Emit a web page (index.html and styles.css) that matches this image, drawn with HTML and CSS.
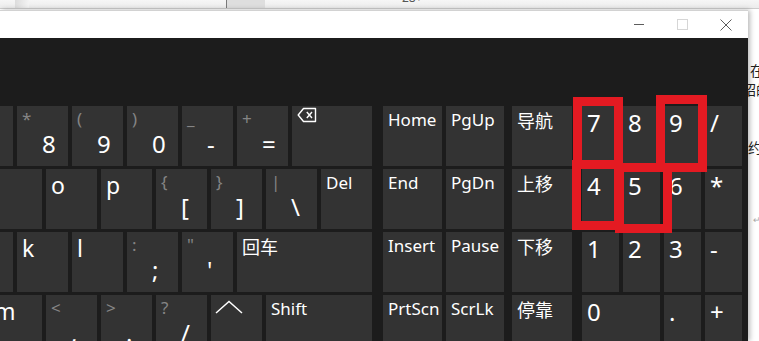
FILE: index.html
```html
<!DOCTYPE html>
<html lang="zh-CN">
<head>
    <meta charset="UTF-8">
    <meta name="viewport" content="width=device-width, initial-scale=1.0">
    <title>屏幕键盘</title>
    <link rel="stylesheet" href="styles.css">
</head>
<body>
    <div class="topbar">
        <span class="tb-grip"></span>
        <span class="tb-tab"></span>
        <span class="tb-text">28↩</span>
    </div>

    <div class="stage">
        <div class="osk">
            <div class="titlebar">
                <span class="win-btn"><span class="ico-min"></span></span>
                <span class="win-btn"><span class="ico-max"></span></span>
                <span class="win-btn">
                    <svg width="12" height="12" viewBox="0 0 12 12"><path d="M0.5 0.5 L11.5 11.5 M11.5 0.5 L0.5 11.5" stroke="#5c5c5c" stroke-width="1" fill="none"/></svg>
                </span>
            </div>

            <div class="osk-body">
                <div class="main-keys">
                    <div class="row r1">
                        <div class="key"></div>
                        <div class="key"><span class="alt">*</span><span class="main">8</span></div>
                        <div class="key"><span class="alt">(</span><span class="main">9</span></div>
                        <div class="key"><span class="alt">)</span><span class="main">0</span></div>
                        <div class="key"><span class="alt">_</span><span class="main">-</span></div>
                        <div class="key"><span class="alt">+</span><span class="main">=</span></div>
                        <div class="key bksp">
                            <svg width="20" height="16" viewBox="0 0 20 16"><path d="M6.5 1.5 H18.5 V14.5 H6.5 L1.2 8 Z" stroke="#fff" stroke-width="1.4" fill="none" stroke-linejoin="round"/><path d="M9.8 5 L15 11 M15 5 L9.8 11" stroke="#fff" stroke-width="1.4"/></svg>
                        </div>
                    </div>
                    <div class="row r2">
                        <div class="key"></div>
                        <div class="key"><span class="ltr">o</span></div>
                        <div class="key"><span class="ltr">p</span></div>
                        <div class="key"><span class="alt">{</span><span class="main">[</span></div>
                        <div class="key"><span class="alt">}</span><span class="main">]</span></div>
                        <div class="key"><span class="alt">|</span><span class="main">\</span></div>
                        <div class="key del"><span class="txt">Del</span></div>
                    </div>
                    <div class="row r3">
                        <div class="key"></div>
                        <div class="key"><span class="ltr">k</span></div>
                        <div class="key"><span class="ltr">l</span></div>
                        <div class="key"><span class="alt">:</span><span class="main">;</span></div>
                        <div class="key"><span class="alt">"</span><span class="main">'</span></div>
                        <div class="key enter"><span class="cjk">回车</span></div>
                    </div>
                    <div class="row r4">
                        <div class="key m-key"><span class="ltr">m</span></div>
                        <div class="key"><span class="alt">&lt;</span><span class="main">,</span></div>
                        <div class="key"><span class="alt">&gt;</span><span class="main">.</span></div>
                        <div class="key"><span class="alt">?</span><span class="main">/</span></div>
                        <div class="key up">
                            <svg width="28" height="14" viewBox="0 0 28 14"><path d="M1 13 L14 1.5 L27 13" stroke="#fff" stroke-width="1.5" fill="none"/></svg>
                        </div>
                        <div class="key shift"><span class="txt">Shift</span></div>
                    </div>
                </div>

                <div class="nav-keys">
                    <div class="key"><span class="txt">Home</span></div>
                    <div class="key"><span class="txt">PgUp</span></div>
                    <div class="key"><span class="cjk">导航</span></div>
                    <div class="key"><span class="txt">End</span></div>
                    <div class="key"><span class="txt">PgDn</span></div>
                    <div class="key"><span class="cjk">上移</span></div>
                    <div class="key"><span class="txt">Insert</span></div>
                    <div class="key"><span class="txt">Pause</span></div>
                    <div class="key"><span class="cjk">下移</span></div>
                    <div class="key"><span class="txt">PrtScn</span></div>
                    <div class="key"><span class="txt">ScrLk</span></div>
                    <div class="key"><span class="cjk">停靠</span></div>
                </div>

                <div class="numpad">
                    <div class="key"><span class="num">7</span></div>
                    <div class="key"><span class="num">8</span></div>
                    <div class="key"><span class="num">9</span></div>
                    <div class="key"><span class="num">/</span></div>
                    <div class="key"><span class="num">4</span></div>
                    <div class="key"><span class="num">5</span></div>
                    <div class="key"><span class="num">6</span></div>
                    <div class="key"><span class="num">*</span></div>
                    <div class="key"><span class="num">1</span></div>
                    <div class="key"><span class="num">2</span></div>
                    <div class="key"><span class="num">3</span></div>
                    <div class="key"><span class="num">-</span></div>
                    <div class="key zero"><span class="num">0</span></div>
                    <div class="key"><span class="num">.</span></div>
                    <div class="key"><span class="num">+</span></div>
                </div>

                <!-- red marks drawn over the keypad -->
                <div class="mark m7"></div>
                <div class="mark m9"></div>
                <div class="mark m4"></div>
                <div class="mark m5"></div>
            </div>
        </div>

        <div class="doc">
            <p class="l1">在</p>
            <p class="l2">绍的</p>
            <p class="l3">约</p>
            <p class="l4">↵</p>
        </div>
    </div>
</body>
</html>
```

FILE: styles.css
```css
body {
    margin: 0;
    width: 759px;
    height: 341px;
    overflow: hidden;
    background: #fff;
    font-family: "Noto Sans", "Noto Sans CJK SC", sans-serif;
}

/* strip of the window behind */
.topbar {
    height: 8px;
    background: linear-gradient(#f6f6f6, #ececec);
    border-bottom: 1px solid #cdcdcd;
    display: flex;
    overflow: hidden;
}
.tb-grip {
    width: 14px;
    margin-left: 15px;
    background: linear-gradient(90deg, #dcdcdc, #f4f4f4);
}
.tb-tab {
    width: 38px;
    margin-left: 197px;
    background: #dedede;
    border-left: 1px solid #7a7a7a;
}
.tb-text {
    margin-left: 137px;
    margin-top: -9px;
    font-size: 12px;
    line-height: 14px;
    color: #555;
}

.stage {
    display: flex;
    padding-top: 1px;
}

/* keyboard window */
.osk {
    flex: 0 0 748px;
    border-top: 1px solid #d2d2d2;
    box-shadow: 2px 0 5px rgba(0, 0, 0, 0.28);
    position: relative;
    z-index: 1;
}
.titlebar {
    height: 27px;
    background: #fff;
    display: flex;
    justify-content: flex-end;
}
.win-btn {
    width: 44px;
    display: flex;
    align-items: center;
    justify-content: center;
}
.ico-min {
    width: 10px;
    height: 1px;
    background: #5c5c5c;
    margin-left: 2px;
}
.ico-max {
    width: 9px;
    height: 9px;
    border: 1px solid #d6d6d6;
}

.osk-body {
    height: 303px;
    background: #1c1c1c;
    padding: 68px 5px 0 0;
    box-sizing: border-box;
    display: flex;
    position: relative;
}

.key {
    background: #333;
    color: #fff;
    height: 60px;
    box-sizing: border-box;
    padding: 3px 5px;
    display: flex;
    flex-direction: column;
    align-items: flex-start;
}

.main-keys {
    width: 372px;
    overflow: hidden;
    display: flex;
    flex-direction: column;
    gap: 3px;
}
.row {
    display: flex;
    gap: 4px;
}
.row .key {
    flex: 0 0 51px;
}
.r1, .r3 { margin-left: -38px; }
.r2, .r4 { margin-left: -9px; }
.row .m-key { padding-left: 3px; }
.row .bksp { flex-basis: 80px; padding-top: 1px; }
.row .del { flex-basis: 52px; }
.row .enter { flex-basis: 135px; }
.row .shift { flex-basis: 107px; }
.row .up { padding-top: 5px; padding-left: 4px; }

.alt {
    font-size: 17px;
    line-height: 20px;
    color: #858585;
}
.main {
    font-size: 24px;
    line-height: 24px;
    margin: 3px 0 0 20px;
}
.ltr {
    font-size: 23px;
    line-height: 24px;
    margin-top: 1px;
}
.txt {
    font-size: 17px;
    line-height: 20px;
    margin-top: 1px;
}
.cjk {
    font-family: "Noto Sans CJK SC", sans-serif;
    font-size: 18px;
    line-height: 20px;
    margin-top: 1px;
}
.num {
    font-size: 24px;
    line-height: 28px;
}

.nav-keys {
    margin-left: 11px;
    display: grid;
    grid-template-columns: 59px 58px 64px;
    grid-auto-rows: 60px;
    column-gap: 4px;
    row-gap: 3px;
    align-content: start;
}
.nav-keys .key:nth-child(3n) {
    margin-left: 4px;
}

.numpad {
    margin-left: 10px;
    display: grid;
    grid-template-columns: repeat(4, 37px);
    grid-auto-rows: 60px;
    gap: 3px 4px;
    align-content: start;
}
.numpad .zero {
    grid-column: span 2;
}

/* hand-drawn red boxes */
.mark {
    position: absolute;
    border: 9px solid #e41a22;
    box-sizing: border-box;
}
.m7 { left: 573px; top: 59px; width: 50px; height: 72px; }
.m9 { left: 656px; top: 57px; width: 51px; height: 77px; }
.m4 { left: 572px; top: 122px; width: 51px; height: 70px; }
.m5 { left: 615px; top: 125px; width: 57px; height: 70px; }

/* document page on the right */
.doc {
    flex: 1;
    overflow: hidden;
    color: #222;
    font-family: "Noto Sans CJK SC", sans-serif;
    font-size: 14px;
    line-height: 16px;
}
.doc p {
    margin: 0;
    white-space: nowrap;
}
.l1 { margin-top: 52px !important; padding-left: 2px; }
.l2 { margin-top: 3px !important; margin-left: -6px !important; }
.l3 { margin-top: 42px !important; }
.l4 {
    margin-top: 57px !important;
    padding-left: 5px;
    font-size: 9px;
    color: #aaa;
}
```
